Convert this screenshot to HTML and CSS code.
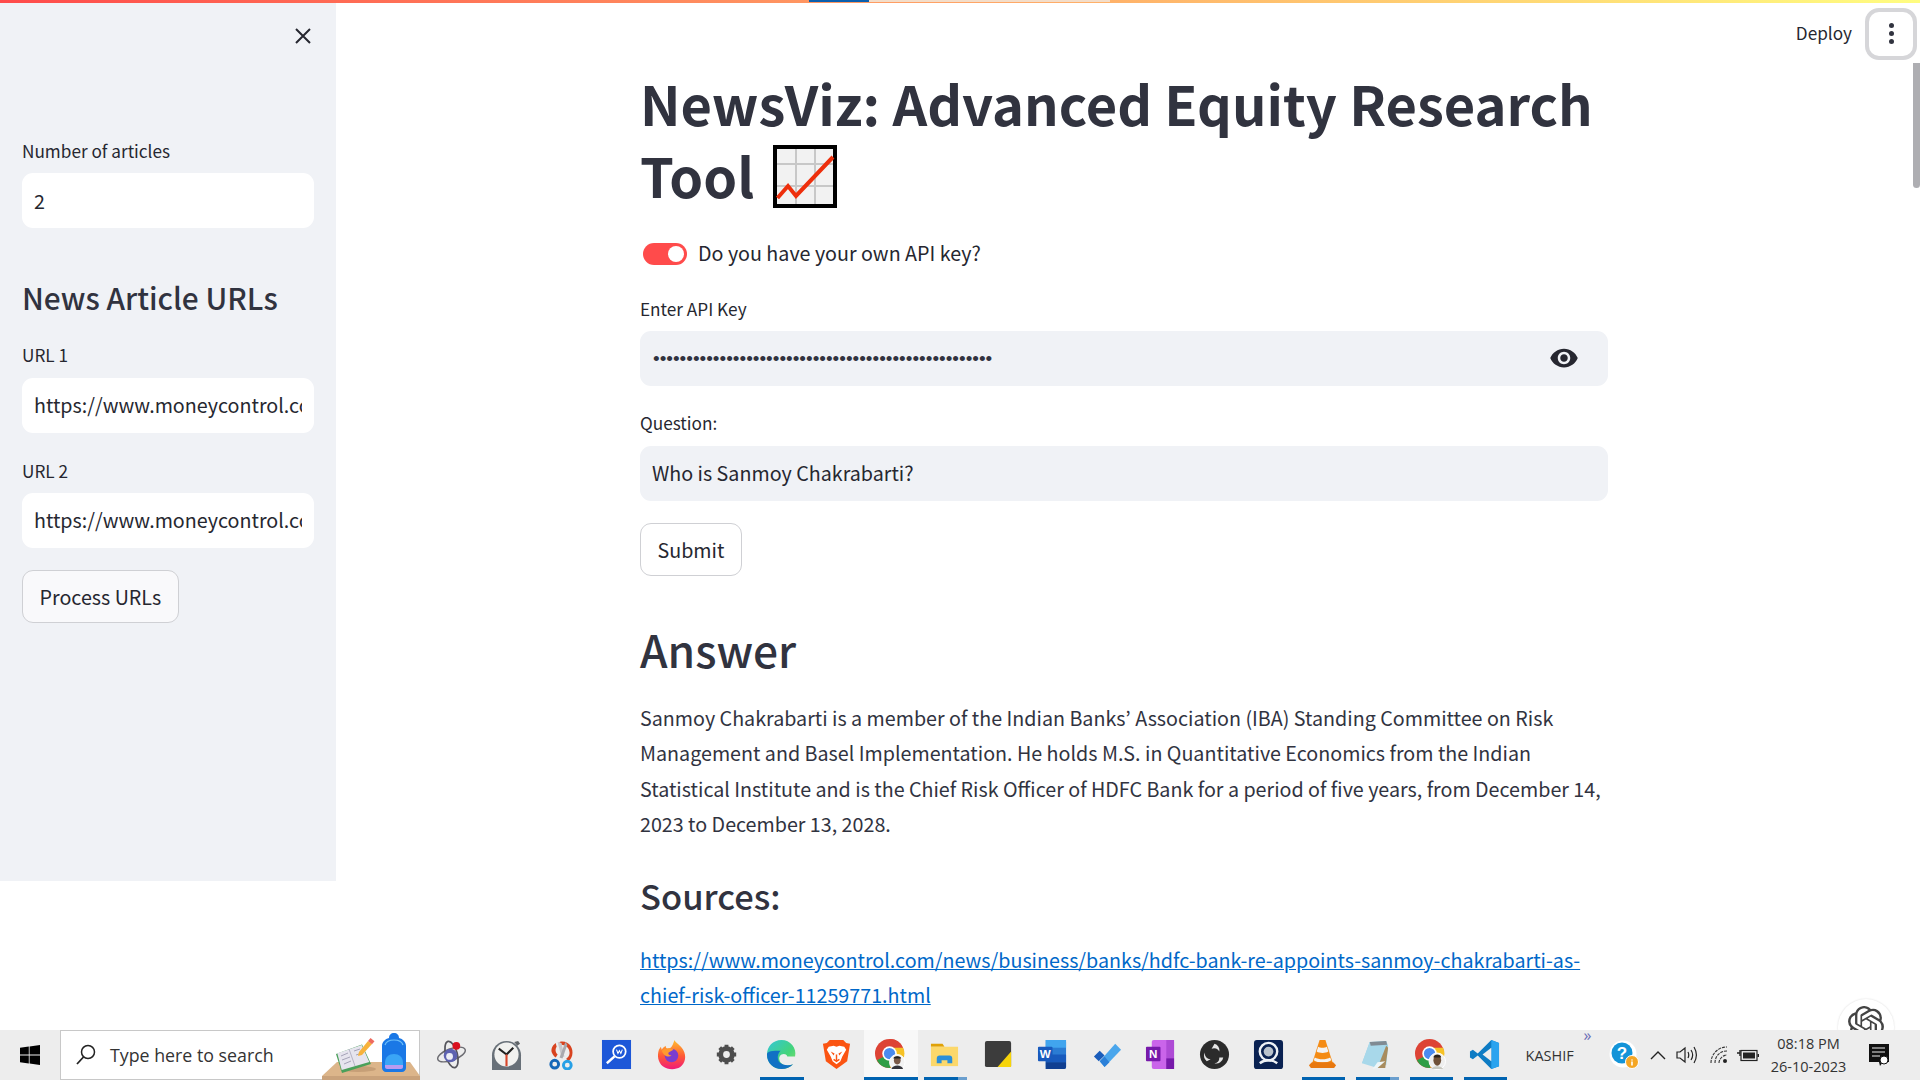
FILE: index.html
```html
<!DOCTYPE html>
<html lang="en">
<head>
<meta charset="utf-8">
<title>NewsViz</title>
<link rel="stylesheet" href="styles.css">
</head>
<body>
<div class="screen">
  <div class="app">
    <aside class="sidebar">
      <div class="side-close">
        <svg class="close-icon" viewBox="0 0 16 16"><path d="M1 1l14 14M15 1L1 15"/></svg>
      </div>
      <div class="label side-first">Number of articles</div>
      <div class="field field-white">2</div>
      <h2 class="side-title">News Article URLs</h2>
      <div class="label">URL 1</div>
      <div class="field field-white"><span class="clip">https://www.moneycontrol.com/news/business/banks/hdfc-bank</span></div>
      <div class="label label-next">URL 2</div>
      <div class="field field-white"><span class="clip">https://www.moneycontrol.com/news/business/banks/hdfc-bank</span></div>
      <div class="btn btn-side">Process URLs</div>
    </aside>
    <main class="main">
      <h1 class="title">NewsViz: Advanced Equity Research Tool <svg class="chart-emoji" viewBox="0 0 64 63"><rect x="2" y="2" width="60" height="59" fill="#f2f2f2" stroke="#000" stroke-width="4"/><path d="M23 4v55M42 4v55M4 19h56M4 41h56" stroke="#c8c8c8" stroke-width="2" fill="none"/><path d="M4.500 53 15 41l8 10L60 12" stroke="#ee2f0c" stroke-width="4" fill="none"/></svg></h1>
      <div class="toggle-row">
        <span class="toggle"><span class="knob"></span></span>
        <span class="toggle-text">Do you have your own API key?</span>
      </div>
      <div class="label label-api">Enter API Key</div>
      <div class="field field-grey field-pass">
        <span class="dots">•••••••••••••••••••••••••••••••••••••••••••••••••••</span>
        <svg class="eye" viewBox="0 0 24 24"><path d="M12 4.500C7 4.500 2.730 7.610 1 12c1.730 4.390 6 7.500 11 7.500s9.270-3.110 11-7.500c-1.730-4.390-6-7.500-11-7.500zM12 17c-2.760 0-5-2.240-5-5s2.240-5 5-5 5 2.240 5 5-2.240 5-5 5zm0-8c-1.660 0-3 1.340-3 3s1.340 3 3 3 3-1.340 3-3-1.340-3-3-3z"/></svg>
      </div>
      <div class="label label-q">Question:</div>
      <div class="field field-grey">Who is Sanmoy Chakrabarti?</div>
      <div class="btn btn-main">Submit</div>
      <h2 class="answer-title">Answer</h2>
      <p class="answer">Sanmoy Chakrabarti is a member of the Indian Banks’ Association (IBA) Standing Committee on Risk Management and Basel Implementation. He holds M.S. in Quantitative Economics from the Indian Statistical Institute and is the Chief Risk Officer of HDFC Bank for a period of five years, from December 14, 2023 to December 13, 2028.</p>
      <h3 class="sources-title">Sources:</h3>
      <a class="source" href="#">https://www.moneycontrol.com/news/business/banks/hdfc-bank-re-appoints-sanmoy-chakrabarti-as-chief-risk-officer-11259771.html</a>
    </main>
    <div class="progress"><span class="progress-blue"></span><span class="progress-light"></span></div>
    <div class="toolbar">
      <span class="deploy">Deploy</span>
      <span class="menu-btn"><i></i><i></i><i></i></span>
    </div>
    <div class="scroll-thumb"></div>
    <div class="gpt-badge">
      <svg class="gpt-logo" viewBox="0 0 24 24"><path d="M22.282 9.821a5.985 5.985 0 0 0-.516-4.911 6.046 6.046 0 0 0-6.51-2.9A6.065 6.065 0 0 0 4.981 4.182a5.985 5.985 0 0 0-3.998 2.9 6.046 6.046 0 0 0 .743 7.097 5.98 5.98 0 0 0 .511 4.911 6.051 6.051 0 0 0 6.515 2.9A5.985 5.985 0 0 0 13.26 24a6.056 6.056 0 0 0 5.772-4.206 5.989 5.989 0 0 0 3.998-2.9 6.056 6.056 0 0 0-.748-7.073zm-9.022 12.608a4.476 4.476 0 0 1-2.876-1.041l.142-.08 4.778-2.758a.795.795 0 0 0 .393-.682v-6.737l2.02 1.169a.071.071 0 0 1 .038.052v5.583a4.504 4.504 0 0 1-4.495 4.494zm-9.661-4.125a4.471 4.471 0 0 1-.535-3.014l.142.085 4.783 2.758a.771.771 0 0 0 .781 0l5.843-3.368v2.332a.08.08 0 0 1-.033.062L9.74 19.950a4.499 4.499 0 0 1-6.141-1.646zM2.341 7.896a4.485 4.485 0 0 1 2.365-1.973V11.600a.766.766 0 0 0 .388.677l5.814 3.354-2.02 1.169a.076.076 0 0 1-.071 0l-4.83-2.787A4.504 4.504 0 0 1 2.341 7.872zm16.596 3.856L13.104 8.364 15.119 7.200a.076.076 0 0 1 .071 0l4.83 2.791a4.494 4.494 0 0 1-.676 8.104v-5.677a.79.79 0 0 0-.407-.667zm2.011-3.023l-.142-.085-4.774-2.782a.776.776 0 0 0-.785 0L9.409 9.230V6.897a.066.066 0 0 1 .028-.061l4.830-2.787a4.499 4.499 0 0 1 6.680 4.660zM8.307 12.863l-2.020-1.164a.08.08 0 0 1-.038-.057V6.074a4.499 4.499 0 0 1 7.376-3.454l-.142.081L8.704 5.459a.795.795 0 0 0-.393.681zm1.098-2.365l2.602-1.500 2.607 1.500v2.999l-2.597 1.500-2.607-1.500z"/></svg>
    </div>
  </div>

  <footer class="taskbar">
    <div class="start">
      <svg class="win" viewBox="0 0 20 20"><path d="M0 2.800 8.800 1.600v8H0zM9.600 1.500 20 0v9.600H9.600zM0 10.400h8.800v8L0 17.200zM9.600 10.400H20V20L9.600 18.500z"/></svg>
    </div>
    <div class="search">
      <svg class="search-icon" viewBox="0 0 20 22"><circle cx="12" cy="8" r="6.500" fill="none" stroke="#222" stroke-width="1.500"/><path d="M7.500 13 1 20" stroke="#222" stroke-width="1.800"/></svg>
      <span class="search-text">Type here to search</span>
      <svg class="scene" viewBox="0 0 98 50">
        <path d="M15 32h73l10 14H0z" fill="#dcb58a"/><path d="M0 46h98v4H0z" fill="#c9a27b"/>
        <ellipse cx="36" cy="39" rx="18" ry="3" fill="#c69f77"/>
        <path d="M14 24 40 14.500 49 34 20 43z" fill="#4aa05a"/>
        <path d="M15.300 23.300 39.700 15 47.300 32 19.700 40z" fill="#e6e4ee"/>
        <path d="M27 19l6 17" stroke="#b5b3c6" stroke-width="1" fill="none"/>
        <path d="M19 26l7-3M20 30l8-3M22 34l7-3M32 21l6-2M34 25l6-2" stroke="#a5a3b8" stroke-width="1" fill="none"/>
        <path d="M36 26l1-4 9-11 4 3-10 11z" fill="#f7b23b"/><path d="M46 11l2.500-3 4 3.200-2.500 3z" fill="#ee6a5e"/>
        <path d="M60 16c0-4 3-7 7-8 0-3 2-5 5-5s5 2 5 5c4 1 7 4 7 8v22c0 2-2 4-4 4H64c-2 0-4-2-4-4z" fill="#1a78e6"/>
        <path d="M63 33c0-6 4-9 9-9s9 3 9 9v3c0 1-1 2-2 2H65c-1 0-2-1-2-2z" fill="#3aa5f6"/>
        <path d="M63 35h18v2c0 1-1 2-2 2H65c-1 0-2-1-2-2z" fill="#b99bf0"/>
        <path d="M63 15c1-3 4-5 9-5s8 2 9 5" stroke="#6ec0fa" stroke-width="1.200" fill="none"/>
      </svg>
    </div>
    <div class="tasks">
      <span class="task"><svg viewBox="0 0 32 32"><ellipse cx="16" cy="16" rx="15" ry="6" transform="rotate(-20 16 16)" fill="none" stroke="#6c6c72" stroke-width="1.500"/><ellipse cx="16" cy="16" rx="6" ry="14" transform="rotate(-15 16 16)" fill="none" stroke="#55555c" stroke-width="1.800"/><circle cx="15" cy="17" r="7" fill="#5d62b0"/><circle cx="14" cy="18" r="3.500" fill="#eceef5"/><circle cx="21" cy="7" r="4" fill="#d9101f"/></svg></span>
      <span class="task"><svg viewBox="0 0 32 32"><path d="M24 3l4-1 2 3-3 2z" fill="#5f6468"/><rect x="1" y="2" width="30" height="30" rx="15" fill="#687078"/><path d="M1 17h30v15H1z" fill="#687078"/><circle cx="16" cy="16" r="12.500" fill="#f1f1ef"/><path d="M16 16 8 10M16 16l7-7" stroke="#222" stroke-width="2.200" fill="none"/><path d="M16 16v12" stroke="#d8452a" stroke-width="2.200"/></svg></span>
      <span class="task"><svg viewBox="0 0 32 32"><path d="M14 3c9-2 15 6 13 14-1 3-2 5-5 6l-1-3c3-2 4-5 3-8-1-4-5-6-10-6z" fill="#d8431f"/><path d="M10 4c-4 3-5 7-4 10 1 2 2 4 4 5l2-3c-2-2-3-5-1-8z" fill="#d8431f"/><path d="M12 3l4 16 3-1-3-14z" fill="#c8c8cc"/><path d="M20 3l-6 16 3 1 5-14z" fill="#a9a9ae"/><circle cx="9" cy="26" r="4" fill="none" stroke="#1467b8" stroke-width="3"/><circle cx="22" cy="27" r="4" fill="none" stroke="#27a0e6" stroke-width="3"/></svg></span>
      <span class="task"><svg viewBox="0 0 32 32"><rect x="1" y="1" width="30" height="30" fill="#1d57d8"/><circle cx="19" cy="13" r="6.500" fill="none" stroke="#fff" stroke-width="1.800"/><path d="M14 18 6 25" stroke="#fff" stroke-width="2.500"/><path d="M16 11l1.500 4 1.500-3 1.500 3 1.500-4" stroke="#fff" stroke-width="1.100" fill="none"/></svg></span>
      <span class="task"><svg viewBox="0 0 32 32"><defs><linearGradient id="ffx" x1="0" y1="0" x2="0" y2="1"><stop offset="0" stop-color="#ffbd2e"/><stop offset=".55" stop-color="#ff5a35"/><stop offset="1" stop-color="#f01a7a"/></linearGradient></defs><path d="M19 1c1 3 6 5 9 10 4 7 2 14-3 18-5 3-13 3-18-1C2 24 1 17 3 11l2-3 1 3c1-2 3-3 4-4 0 2 1 3 2 3 3 0 5-2 7-9z" fill="url(#ffx)"/><circle cx="16" cy="17" r="7" fill="#7a3dd0"/><path d="M6 12c4-3 9-3 12-1l-5 3c-1 2 1 3 3 3-3 2-8 1-10-5z" fill="#ff9a2e"/></svg></span>
      <span class="task"><svg viewBox="0 0 32 32"><path d="M16 7.500a8.500 8.500 0 1 0 0 17 8.500 8.500 0 0 0 0-17zm0 5a3.500 3.500 0 1 1 0 7 3.500 3.500 0 0 1 0-7z" fill="#4e4e4e" fill-rule="evenodd"/><path d="M16 6v4M16 22v4M6 16h4M22 16h4M9 9l3 3M20 20l3 3M23 9l-3 3M12 20l-3 3" stroke="#4e4e4e" stroke-width="4"/></svg></span>
      <span class="task ul-short"><svg viewBox="0 0 32 32"><defs><linearGradient id="edg" x1="0" y1="0" x2="1" y2="1"><stop offset="0" stop-color="#33c6d8"/><stop offset=".6" stop-color="#45d47a"/><stop offset="1" stop-color="#8ee06a"/></linearGradient></defs><path d="M16 1C7 1 1 8 1 16c0 9 7 15 15 15 5 0 9-2 12-5-6 3-13 1-14-4-1-2 0-5 2-6 2-1 5-1 6 2h8c2-9-5-17-14-17z" fill="url(#edg)"/><path d="M1 16c0 9 7 15 15 15 5 0 9-2 12-5-5 2-11 1-14-2-3-4-2-9 1-12-8 0-14 0-14 4z" fill="#1171c4"/></svg></span>
      <span class="task"><svg viewBox="0 0 32 32"><path d="M9 1h14l3 3 4 1-3 18-11 8-11-8L2 5l4-1z" fill="#fb5412"/><path d="M8 8l5-1 3 1 3-1 5 1 2 3-4 7-2 5-4 3-4-3-2-5-4-7z" fill="#fff"/><path d="M10 13l4 2-1 2zM22 13l-4 2 1 2z" fill="#fb5412"/><path d="M16 16v6M13 21l3 2 3-2" stroke="#fb5412" stroke-width="1.500" fill="none"/></svg></span>
      <span class="task task-active ul-full"><svg viewBox="0 0 32 32"><circle cx="15" cy="15" r="15" fill="#dd4335"/><path d="M15 15 2 22a15 15 0 0 0 14 8z" fill="#2e9e46"/><path d="M15 0a15 15 0 0 1 14 9H15z" fill="#dd4335"/><path d="M15 9h14a15 15 0 0 1-1 14L16 30z" fill="#f6c225"/><circle cx="15" cy="15" r="7.500" fill="#fff"/><circle cx="15" cy="15" r="5.800" fill="#4a8bf0"/><circle cx="23" cy="24" r="8" fill="#f3f3f3" stroke="#fff"/><ellipse cx="23" cy="22" rx="3.500" ry="4.200" fill="#7a5a48"/><path d="M19 20c0-3 8-3 8 0z" fill="#222"/><path d="M17 31c1-5 11-5 12 0z" fill="#34343a"/></svg></span>
      <span class="task ul-part"><svg viewBox="0 0 32 32"><path d="M2 5h12l2 3H2z" fill="#e0a106"/><rect x="2" y="8" width="28" height="20" fill="#fcd86b"/><path d="M8 25v-5a3 3 0 0 1 3-3h10a3 3 0 0 1 3 3v5h-5v-3h-6v3z" fill="#2a8fda"/></svg></span>
      <span class="task"><svg viewBox="0 0 32 32"><rect x="2" y="2" width="27" height="27" rx="2" fill="#3c3c3c"/><path d="M29 13 15 29h14z" fill="#f7d40a"/></svg></span>
      <span class="task"><svg viewBox="0 0 32 32"><path d="M9 1h19a2 2 0 0 1 2 2v26a2 2 0 0 1-2 2H9z" fill="#2b7cd3"/><path d="M9 1h21v8H9z" fill="#41a5ee"/><path d="M9 16h21v8H9z" fill="#185abd"/><path d="M9 24h21v5a2 2 0 0 1-2 2H9z" fill="#103f91"/><rect x="1" y="8" width="15" height="15" rx="1" fill="#185abd"/><text class="tile-letter" x="8.500" y="20" text-anchor="middle">W</text></svg></span>
      <span class="task"><svg viewBox="0 0 32 32"><path d="M3 18l6-6 5 5-6 6z" fill="#1a5dbb"/><path d="M9 23 25 5l6 6-17 18z" fill="#4aa6ec"/><path d="M9 23l5-5 5 6-5 5z" fill="#2b80d8"/></svg></span>
      <span class="task"><svg viewBox="0 0 32 32"><rect x="7" y="1" width="23" height="30" rx="2" fill="#ca64ea"/><path d="M22 1h8v30h-8z" fill="#ae4bd5"/><path d="M22 20h8v11h-8z" fill="#7719aa"/><rect x="1" y="8" width="15" height="15" rx="1" fill="#7719aa"/><text class="tile-letter" x="8.500" y="20" text-anchor="middle">N</text></svg></span>
      <span class="task"><svg viewBox="0 0 32 32"><circle cx="16" cy="16" r="15" fill="#2b2b2b"/><path d="M16 5a7 7 0 0 1 5 8 6 6 0 0 0-8-3zM25 19a7 7 0 0 1-9 6 6 6 0 0 0 5-6zM8 23a7 7 0 0 1-2-9 6 6 0 0 0 6 7z" fill="#e4e4e4"/></svg></span>
      <span class="task"><svg viewBox="0 0 32 32"><rect x="1" y="1" width="30" height="30" rx="3" fill="#0a2252"/><circle cx="16" cy="13" r="9" fill="none" stroke="#eef2f6" stroke-width="2.500"/><circle cx="16" cy="13" r="5" fill="#b9c2cc"/><path d="M7 25c5-4 13-4 18 0" stroke="#eef2f6" stroke-width="2.500" fill="none"/></svg></span>
      <span class="task ul-short"><svg viewBox="0 0 32 32"><path d="M13 1h6l8 25H5z" fill="#f48b14"/><path d="M11.500 8c2 1.500 7 1.500 9 0l1.500 5c-3 2-9 2-12 0zM8 19c4 2.500 12 2.500 16 0l1 3c-4 3-14 3-18 0z" fill="#f3f3f3"/><path d="M2 27l3-3h22l3 3-2 3H4z" fill="#e8780f"/></svg></span>
      <span class="task ul-part"><svg viewBox="0 0 32 32"><path d="M9 3l17-1 2 5-2 20-19-4-6 2z" fill="#9dd3e8"/><path d="M9 3 1 25l16 5 9-23z" fill="#a8d8ea"/><path d="M26 7l2 2-3 21-8 0z" fill="#a88c5e"/><path d="M9 3l17-1 1 4-17 1z" fill="#808a92"/><path d="M12 31l5-1 8-7-8 1z" fill="#eef6f8"/></svg></span>
      <span class="task ul-short"><svg viewBox="0 0 32 32"><circle cx="15" cy="15" r="15" fill="#dd4335"/><path d="M15 15 2 22a15 15 0 0 0 14 8z" fill="#2e9e46"/><path d="M15 9h14a15 15 0 0 1-1 14L16 30z" fill="#f6c225"/><circle cx="15" cy="15" r="7.500" fill="#fff"/><circle cx="15" cy="15" r="5.800" fill="#4a8bf0"/><circle cx="23" cy="23" r="8.500" fill="#efefef" stroke="#fff"/><ellipse cx="23" cy="22" rx="4" ry="5.500" fill="#6f5038"/><path d="M19 19c0-4 8-4 8 0z" fill="#2a2118"/><path d="M17 31c1-4 11-4 12 0z" fill="#c8c8c0"/></svg></span>
      <span class="task ul-short"><svg viewBox="0 0 32 32"><path d="M23 1 9 15l-5-4-3 2v6l3 2 5-4 14 14 8-3V4z" fill="#0e7cc4"/><path d="M23 1l8 3v24l-8 3z" fill="#2aa3ef"/><path d="M23 9v14l-9-7z" fill="#ededed"/></svg></span>
    </div>
    <div class="tray">
      <span class="kashif">KASHIF</span>
      <span class="more">»</span>
      <svg class="tray-help" viewBox="0 0 30 30"><circle cx="14" cy="14" r="13.500" fill="#fff"/><circle cx="13" cy="13" r="10.500" fill="#1494d8"/><text class="help-mark" x="13" y="19" text-anchor="middle">?</text><circle cx="23" cy="22" r="6.500" fill="#f5a623" stroke="#fff"/><path d="M23 19.500v1M23 21.500v4" stroke="#fff" stroke-width="1.600"/></svg>
      <svg class="tray-up" viewBox="0 0 16 10"><path d="M1 9l7-7 7 7" fill="none" stroke="#222" stroke-width="1.400"/></svg>
      <svg class="tray-vol" viewBox="0 0 22 20"><path d="M1 7v6h3l5 4V3L4 7z" fill="none" stroke="#222" stroke-width="1.200"/><path d="M12 7c1 2 1 4 0 6M15 5c2 3 2 7 0 10M18 2c3 5 3 11 0 16" fill="none" stroke="#222" stroke-width="1.200"/></svg>
      <svg class="tray-wifi" viewBox="0 0 18 18"><path d="M1 17C1 8 8 1 17 1M5 17C5 10 10 5 17 5M9 17c0-4 4-8 8-8" fill="none" stroke="#333" stroke-width="1.100" stroke-dasharray="3 1"/><circle cx="15" cy="15" r="2" fill="#222"/></svg>
      <svg class="tray-bat" viewBox="0 0 22 14"><path d="M0 5h3M3 2v6" stroke="#222" stroke-width="1.400"/><rect x="4" y="2.500" width="16" height="10" fill="none" stroke="#222" stroke-width="1.200"/><rect x="6" y="4.500" width="12" height="6" fill="#222"/><path d="M20.500 6h1.500v3h-1.500z" fill="#222"/></svg>
      <div class="clock"><span>08:18 PM</span><span>26-10-2023</span></div>
      <svg class="tray-note" viewBox="0 0 20 22"><path d="M0 0h20v18h-6l-3 4-1-4H0z" fill="#111"/><path d="M3 4h13M3 8h13M3 12h8" stroke="#eee" stroke-width="1.200"/><circle cx="15" cy="16" r="4" fill="#fff" stroke="#111"/></svg>
    </div>
  </footer>
</div>
</body>
</html>
```

FILE: styles.css
```css
* { box-sizing: border-box; }
html, body { margin: 0; padding: 0; }
body {
  width: 1920px;
  height: 1080px;
  overflow: hidden;
  background: #fff;
  color: #262730;
  font-family: "Noto Sans CJK JP", "Noto Sans", sans-serif;
  font-size: 19.700px;
}
.screen { display: flex; flex-direction: column; height: 1080px; }

/* App area */
.app { position: relative; display: flex; align-items: flex-start; height: 1030px; overflow: hidden; }
.sidebar {
  flex: 0 0 336px;
  min-width: 0;
  height: 881px;
  padding: 0 22px;
  background: #f0f2f6;
}
.side-close { display: flex; justify-content: flex-end; height: 139px; padding: 28px 3px 0 0; }
.close-icon { width: 16px; height: 16px; stroke: #262730; stroke-width: 2; fill: none; }
.label { font-size: 17.200px; line-height: 24px; height: 27px; color: #262730; }
.side-first { margin-bottom: 7px; }
.field {
  display: flex;
  align-items: center;
  justify-content: space-between;
  height: 55px;
  padding: 0 12px 1px 12px;
  border-radius: 11px;
  line-height: 35px;
  white-space: nowrap;
}
.field-white { background: #fff; }
.field-grey { background: #f0f2f6; }
.clip { display: block; min-width: 0; width: 100%; overflow: hidden; }
.side-title { margin: 47.500px 0 24px; font-size: 29.800px; line-height: 43px; font-weight: 500; color: #31333f; }
.side-title + .label { margin-bottom: 8px; }
.label-next { margin: 26px 0 7px; }
.btn {
  display: inline-flex;
  align-items: center;
  height: 53px;
  padding: 0 16.500px;
  border: 1px solid #cfd0d4;
  border-radius: 11px;
}
.btn-side { margin-top: 22px; background: #f9f9fb; }

/* Main column */
.main { flex: 1; min-width: 0; padding: 66.500px 312px 0 304px; }
.title { margin: 0; font-size: 54.200px; line-height: 72px; font-weight: 700; color: #31333f; }
.chart-emoji { width: 64px; height: 63px; margin-left: 6.500px; vertical-align: -10px; }
.toggle-row { display: flex; align-items: center; gap: 11px; margin: 29px 0 0 3px; height: 28px; }
.toggle { position: relative; width: 44px; height: 22px; border-radius: 11px; background: #ff4b4b; }
.knob { position: absolute; right: 3px; top: 3px; width: 16px; height: 16px; border-radius: 50%; background: #fff; }
.toggle-text { line-height: 28px; padding-bottom: 2px; }
.label-api { margin-top: 29px; margin-bottom: 7px; }
.label-q { margin: 25px 0 8px; }
.dots { margin-top: 3px; margin-left: 1px; font-family: "Liberation Sans", sans-serif; font-size: 19px; line-height: 20px; color: #31333f; }
.eye { flex: none; width: 30px; height: 30px; margin-right: 17px; fill: #262730; }
.btn-main { margin-top: 22px; background: #fff; }
.answer-title { margin: 42px 0 0; font-size: 44.300px; line-height: 62px; font-weight: 500; color: #31333f; }
.answer { margin: 20.500px 0 0; line-height: 35.400px; color: #31333f; }
.sources-title { margin: 28.700px 0 0; font-size: 34.500px; line-height: 50px; font-weight: 500; color: #31333f; }
.source { display: block; margin-top: 21.500px; line-height: 35.400px; color: #0068c9; }

/* Overlaid page chrome */
.progress { position: absolute; left: 0; top: 0; width: 100%; height: 3px; background: linear-gradient(90deg, #ff4b4b, #fffd80); }
.progress-blue { position: absolute; left: 809px; top: 0; width: 60px; height: 2px; background: #0b5fad; }
.progress-light { position: absolute; left: 869px; top: 0; width: 241px; height: 2px; background: #f3ddc9; }
.toolbar { position: absolute; right: 3px; top: 7px; display: flex; align-items: center; gap: 13px; }
.deploy { font-size: 17.200px; line-height: 52px; padding-bottom: 1px; }
.menu-btn {
  display: flex;
  flex-direction: column;
  align-items: center;
  justify-content: center;
  gap: 3px;
  width: 52px;
  height: 52px;
  border: 4px solid #d6d6d9;
  border-radius: 14px;
}
.menu-btn i { display: block; width: 5px; height: 5px; border-radius: 50%; background: #31333f; }
.scroll-thumb { position: absolute; right: 0; top: 63px; width: 7px; height: 125px; border-radius: 0 0 4px 4px; background: #aeaeb2; }
.gpt-badge {
  position: absolute;
  left: 1838px;
  top: 999px;
  display: flex;
  justify-content: center;
  width: 56px;
  height: 56px;
  padding-top: 7px;
  border-radius: 50%;
  background: #fff;
  box-shadow: 0 0 2px #d8d8d8;
}
.gpt-logo { width: 36px; height: 36px; fill: #444; }

/* Taskbar */
.taskbar {
  display: flex;
  align-items: stretch;
  height: 50px;
  background: #ededed;
  font-family: "Open Sans", "Noto Sans", sans-serif;
  color: #222;
}
.start { display: flex; align-items: center; justify-content: center; width: 60px; }
.win { width: 20px; height: 20px; fill: #000; }
.search {
  display: flex;
  align-items: center;
  position: relative;
  width: 360px;
  padding-left: 15px;
  background: #fff;
  border: 1px solid #c8c8c8;
}
.search-icon { width: 20px; height: 22px; }
.search-text { margin-left: 14px; font-size: 17.800px; color: #333; }
.scene { position: absolute; right: -1px; bottom: -1px; width: 98px; height: 50px; }
.tasks { display: flex; margin-left: 3.500px; }
.task { position: relative; display: flex; align-items: center; justify-content: center; width: 54px; padding-bottom: 2px; }
.task:nth-child(-n+8) { width: 55px; }
.task svg { width: 31px; height: 31px; }
.task-active { background: #f8f8f8; }
.ul-short::after, .ul-full::after, .ul-part::after {
  content: "";
  position: absolute;
  left: 6px;
  right: 5px;
  bottom: 0;
  height: 3px;
  background: #0063b1;
}
.ul-full::after { left: 0; right: 0; }
.ul-part::after { background: linear-gradient(90deg, #0063b1 78%, #6b9fce 78%); }
.tile-letter { font-family: "Liberation Sans", sans-serif; font-size: 12px; font-weight: 700; fill: #fff; }
.help-mark { font-family: "Liberation Sans", sans-serif; font-size: 17px; font-weight: 700; fill: #fff; }
.tray { position: relative; display: flex; align-items: center; flex: 1; padding-left: 14px; }
.kashif { width: 65px; font-size: 14.500px; color: #333; }
.more { position: absolute; left: 72px; top: -4px; font-size: 16px; line-height: 18px; color: #6b6bb5; }
.tray-help { width: 30px; height: 30px; margin-left: 18px; }
.tray-up { width: 16px; height: 10px; margin-left: 11px; }
.tray-vol { width: 22px; height: 20px; margin-left: 10px; }
.tray-wifi { width: 18px; height: 18px; margin-left: 12px; }
.tray-bat { width: 22px; height: 14px; margin-left: 9px; }
.clock { display: flex; flex-direction: column; align-items: center; width: 78px; margin-left: 11px; font-size: 14.500px; line-height: 23px; color: #333; }
.tray-note { width: 20px; height: 22px; margin-left: 21px; }
```
